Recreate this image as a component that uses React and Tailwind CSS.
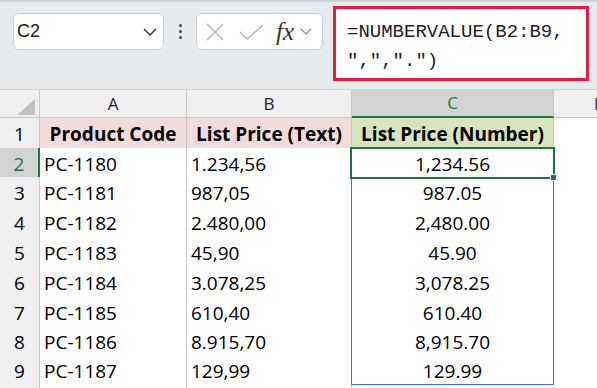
import React from "react"

const rows = [
  ["PC-1180", "1.234,56", "1,234.56"],
  ["PC-1181", "987,05", "987.05"],
  ["PC-1182", "2.480,00", "2,480.00"],
  ["PC-1183", "45,90", "45.90"],
  ["PC-1184", "3.078,25", "3,078.25"],
  ["PC-1185", "610,40", "610.40"],
  ["PC-1186", "8.915,70", "8,915.70"],
  ["PC-1187", "129,99", "129.99"],
]

const rowHeights = ["h-[29px]", "h-[30px]", "h-[30px]", "h-[30px]", "h-[30px]", "h-[29px]", "h-[29px]", "h-[29px]"]

function TopBar() {
  return (
    <div className="relative h-[90px] bg-[#e8ebee] border-b border-[#d0d3d6]">
      <div className="h-[3px] bg-gradient-to-b from-[#c4c8cc] to-[#e8ebee]" />
      <div className="flex items-start">
        <div className="ml-[13px] mt-[10px] w-[151px] h-[37px] bg-white border border-[#c9cdd1] rounded-[6px] flex items-center justify-between pl-[3px] pr-[6px]">
          <span className="text-[18px] text-[#1a1a1a]" style={{ fontFamily: '"Liberation Sans", Arial, sans-serif' }}>C2</span>
          <svg width="14" height="8" viewBox="0 0 14 8" fill="none" stroke="#333" strokeWidth="1.4">
            <path d="M1 1l6 6 6-6" />
          </svg>
        </div>
        <div className="w-[32px] mt-[21px] flex flex-col items-center gap-[3px]">
          <div className="w-[3px] h-[3px] bg-[#444] rounded-full" />
          <div className="w-[3px] h-[3px] bg-[#444] rounded-full" />
          <div className="w-[3px] h-[3px] bg-[#444] rounded-full" />
        </div>
        <div className="mt-[10px] w-[127px] h-[37px] bg-white border border-[#c9cdd1] rounded-[6px] flex items-center pl-[8px]">
          <svg width="20" height="18" viewBox="0 0 20 18" fill="none" stroke="#b3b3b3" strokeWidth="1.3">
            <path d="M2 1l16 16M18 1L2 17" />
          </svg>
          <svg className="ml-[14px]" width="25" height="16" viewBox="0 0 25 16" fill="none" stroke="#b3b3b3" strokeWidth="1.3">
            <path d="M1 8l7 7L24 1" />
          </svg>
          <span className="ml-[12px] text-[25px] italic text-[#3a3330] leading-none" style={{ fontFamily: '"Liberation Serif", "Times New Roman", serif' }}>fx</span>
          <svg className="ml-[6px]" width="12" height="7" viewBox="0 0 12 7" fill="none" stroke="#888" strokeWidth="1.2">
            <path d="M1 1l5 5 5-5" />
          </svg>
        </div>
        <div className="ml-[10px] mt-[3px] w-[256px] h-[75px] bg-white border-[3px] border-[#e21b47] pl-[11px] pt-[9px] text-[19px] leading-[29px] text-[#222]" style={{ fontFamily: '"Liberation Mono", "Courier New", monospace' }}>
          <div>=NUMBERVALUE(B2:B9,</div>
          <div>",",".")</div>
        </div>
      </div>
    </div>
  )
}

function Grid() {
  const font = { fontFamily: '"Open Sans", "Noto Sans", sans-serif' }
  return (
    <div className="relative text-[19px] text-black" style={font}>
      <div className="grid grid-cols-[40px_147px_165px_202px_1fr] h-[28px]">
        <div className="relative bg-[#f0f0f0] border-r border-b border-[#c6c6c6]">
          <svg className="absolute left-[17px] top-[9px]" width="18" height="16" viewBox="0 0 18 16">
            <path d="M18 0V16H0Z" fill="#c2c2c2" />
          </svg>
        </div>
        <div className="bg-[#f0f0f0] border-r border-b border-[#c6c6c6] flex items-center justify-center text-[17px] text-[#222]">A</div>
        <div className="bg-[#f0f0f0] border-r border-b border-[#c6c6c6] flex items-center justify-center text-[17px] text-[#222]">B</div>
        <div className="bg-[#d3d3d3] border-r border-[#c6c6c6] border-b-2 border-b-[#217346] flex items-center justify-center text-[17px] text-[#217346]">C</div>
        <div className="bg-[#f0f0f0] border-b border-[#c6c6c6] flex items-center pl-[40px] text-[17px] text-[#222] overflow-hidden">D</div>
      </div>

      <div className="grid grid-cols-[40px_147px_165px_202px_1fr] h-[30px]">
        <div className="bg-[#f0f0f0] border-r border-b border-[#c6c6c6] flex items-center justify-center pt-[2px]">1</div>
        <div className="bg-[#f2dcdb] border-r border-b border-[#c6c6c6] flex items-center justify-center pt-[2px] font-bold">Product Code</div>
        <div className="bg-[#f2dcdb] border-r border-b border-[#c6c6c6] flex items-center justify-center pt-[2px] font-bold">List Price (Text)</div>
        <div className="bg-[#d8e4bc] border-r border-b border-[#c6c6c6] flex items-center justify-center pt-[2px] font-bold">List Price (Number)</div>
        <div className="bg-white" />
      </div>

      {rows.map((r, i) => (
        <div key={r[0]} className={`grid grid-cols-[40px_147px_165px_202px_1fr] ${rowHeights[i]}`}>
          {i === 0 ? (
            <div className="bg-[#d3d3d3] border-r-2 border-r-[#217346] border-b border-[#c6c6c6] flex items-center justify-center pt-[2px] text-[#217346]">2</div>
          ) : (
            <div className="bg-[#f0f0f0] border-r border-b border-[#c6c6c6] flex items-center justify-center pt-[2px]">{i + 2}</div>
          )}
          <div className="bg-white border-r border-b border-[#c6c6c6] flex items-center pl-[4px] pt-[2px]">{r[0]}</div>
          <div className="bg-white border-r border-b border-[#c6c6c6] flex items-center pl-[4px] pt-[2px]">{r[1]}</div>
          <div className="bg-white border-r border-b border-[#c6c6c6] flex items-center justify-center pt-[2px]">{r[2]}</div>
          <div className="bg-white" />
        </div>
      ))}

      <div className="grid grid-cols-[40px_147px_165px_202px_1fr] h-[30px]">
        <div className="bg-[#f0f0f0] border-r border-[#c6c6c6]" />
        <div className="bg-white border-r border-[#c6c6c6]" />
        <div className="bg-white border-r border-[#c6c6c6]" />
        <div className="bg-white" />
        <div className="bg-white" />
      </div>

      {/* spill range outline */}
      <div className="absolute left-[351px] top-[58px] w-[203px] h-[237px] border-[1.5px] border-[#4472c4] pointer-events-none" />
      {/* active cell */}
      <div className="absolute left-[350px] top-[57px] w-[205px] h-[32px] border-2 border-[#217346] pointer-events-none" />
      <div className="absolute left-[550px] top-[84px] w-[7px] h-[7px] bg-[#217346] border border-white pointer-events-none" />
    </div>
  )
}

export default function App() {
  return (
    <div className="w-[597px] h-[388px] overflow-hidden bg-white">
      <TopBar />
      <Grid />
    </div>
  )
}
